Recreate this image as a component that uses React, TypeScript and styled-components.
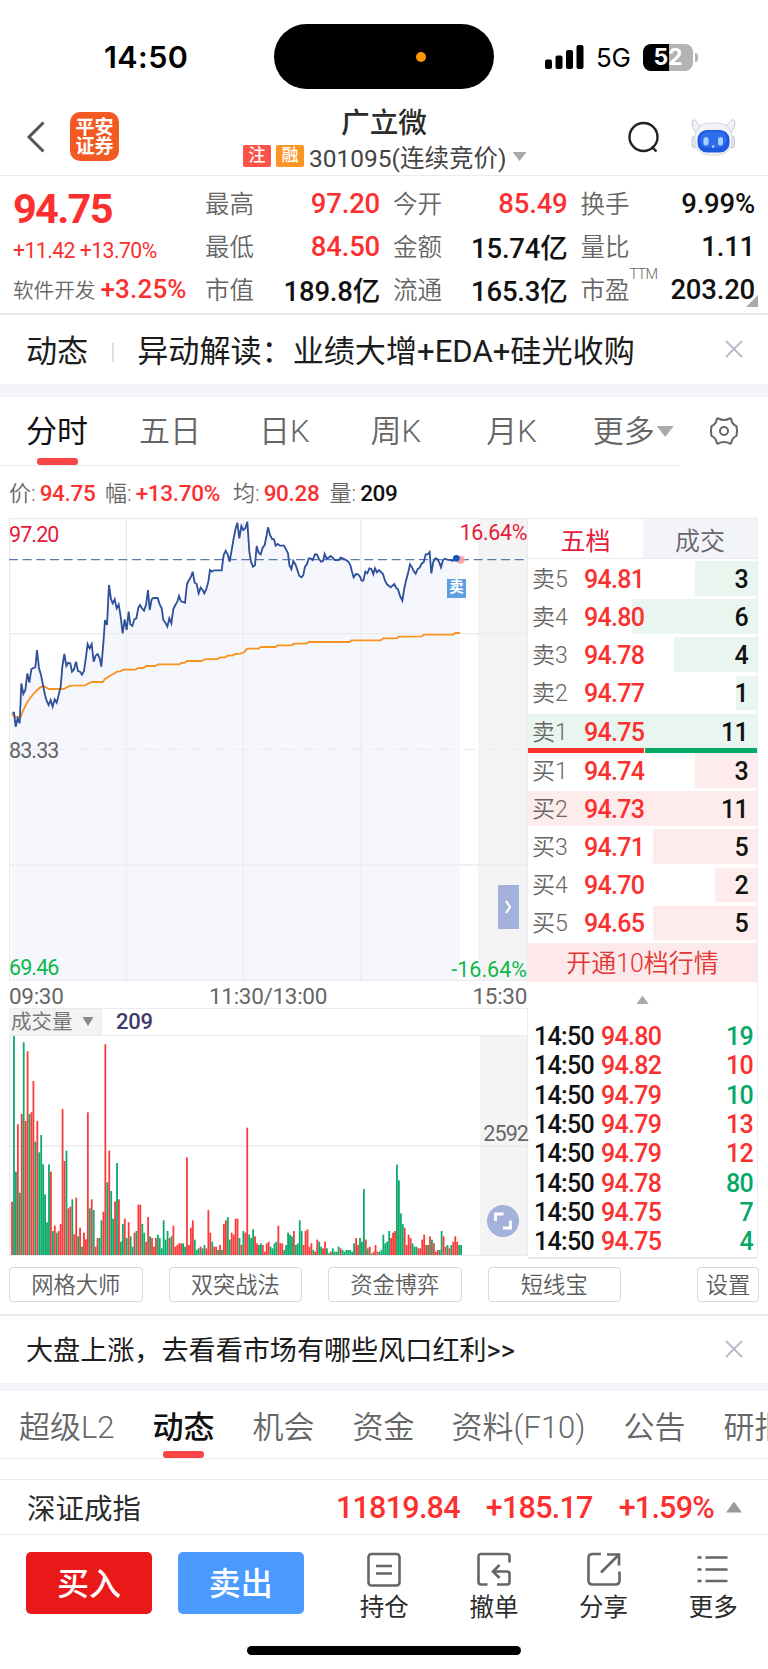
import React from "react";
import styled, { createGlobalStyle } from "styled-components";

const RED = "#fb302f";
const CRIMSON = "#e61a3c";
const GREEN = "#05a866";
const LINE = "#e9ebef";

const GlobalStyle = createGlobalStyle`
  * { box-sizing: border-box; }
  body {
    margin: 0;
    background: #fff;
    color: #111;
    font-family: Roboto, "Noto Sans CJK SC", sans-serif;
    white-space: nowrap;
  }
`;

const Screen = styled.main`
  width: 768px;
  height: 1669px;
  overflow: hidden;
  display: flex;
  flex-direction: column;
`;

/* ---------- status bar ---------- */
const StatusBar = styled.header`
  height: 96px;
  flex: none;
  display: grid;
  grid-template-columns: 274px 220px 1fr;
  padding-top: 24px;
  font-family: Inter, sans-serif;
  color: #000;
`;
const Clock = styled.div`
  height: 66px;
  display: flex;
  align-items: center;
  padding: 0 0 1px 104px;
  font-size: 30.5px;
  font-weight: 600;
  letter-spacing: 0.4px;
`;
const Island = styled.div`
  height: 65px;
  border-radius: 33px;
  background: #000;
  display: flex;
  align-items: center;
  padding: 1px 0 0 142px;
`;
const MicDot = styled.i`
  width: 10px;
  height: 10px;
  border-radius: 50%;
  background: #ff9500;
`;
const Signals = styled.div`
  height: 66px;
  display: flex;
  align-items: center;
  padding-left: 51px;
`;
const Network = styled.span`
  margin-left: 12px;
  width: 47px;
  font-size: 26px;
  letter-spacing: -0.4px;
`;
const Battery = styled.div`
  width: 50px;
  height: 27px;
  border-radius: 8px;
  background: linear-gradient(90deg, #000 52%, #b3b3b3 52%);
  color: #fff;
  font-size: 23px;
  font-weight: 700;
  display: flex;
  align-items: center;
  justify-content: center;
`;
const BatteryCap = styled.i`
  width: 3px;
  height: 9px;
  margin-left: 2px;
  border-radius: 0 3px 3px 0;
  background: #b3b3b3;
`;

/* ---------- title bar ---------- */
const TitleBar = styled.div`
  height: 80px;
  flex: none;
  display: grid;
  grid-template-columns: 70px 173px 1fr 64px 77px;
  border-bottom: 1px solid ${LINE};
`;
const BackSlot = styled.div`padding: 25px 0 0 25px;`;
const Brand = styled.div`
  margin-top: 16px;
  width: 49px;
  height: 49px;
  border-radius: 10px;
  background: #f25a22;
  color: #fff;
  font-size: 19px;
  line-height: 19px;
  font-weight: 700;
  padding-top: 6px;
  text-align: center;
  white-space: normal;
`;
const TitleBlock = styled.div`
  display: flex;
  flex-direction: column;
`;
const StockName = styled.h1`
  margin: 10.5px 0 0 98px;
  font-size: 28.7px;
  line-height: 32px;
  font-weight: 500;
  color: #2b2b2b;
`;
const StockCode = styled.div`
  display: flex;
  align-items: center;
  height: 30px;
  margin-top: 3px;
  font-size: 24.5px;
  color: #444;
`;
const Tag = styled.span<{ $bg: string }>`
  width: 28px;
  height: 22px;
  margin: -1px 5px 0 0;
  border-radius: 2px;
  background: ${(p) => p.$bg};
  color: #fff;
  font-size: 17px;
  line-height: 21px;
  font-weight: 500;
  text-align: center;
`;
const Caret = styled.i<{ $w: number; $h: number; $c?: string; $up?: boolean }>`
  width: ${(p) => p.$w}px;
  height: ${(p) => p.$h}px;
  flex: none;
  background: ${(p) => p.$c || "#aaa"};
  clip-path: ${(p) => (p.$up ? "polygon(50% 0, 100% 100%, 0 100%)" : "polygon(0 0, 100% 0, 50% 100%)")};
`;
const CodeCaret = styled(Caret)`margin-left: 6px;`;
const TabCaret = styled(Caret)`margin: 29px 0 0 2px;`;
const IndexCaret = styled(Caret)`margin-left: 12px;`;
const IconSlot = styled.div<{ $top: number }>`padding-top: ${(p) => p.$top}px;`;

/* ---------- quote ---------- */
const Quote = styled.section`
  height: 139px;
  flex: none;
  position: relative;
  display: grid;
  grid-template-columns: 192px 174px 187.5px 187.5px;
  padding: 5px 14px 0 13px;
  border-bottom: 2px solid ${LINE};
`;
const QuoteCol = styled.div<{ $pad?: number; $top?: number }>`
  display: flex;
  flex-direction: column;
  padding: ${(p) => p.$top || 0}px 0 0 ${(p) => p.$pad || 0}px;
`;
const QuoteRow = styled.div`
  height: 43.2px;
  display: flex;
  align-items: center;
  justify-content: space-between;
`;
const Label = styled.span`
  font-size: 24.5px;
  font-weight: 350;
  color: #666;
`;
const Value = styled.span<{ $up?: boolean }>`
  font-size: 27.5px;
  font-weight: 500;
  letter-spacing: -0.2px;
  margin: 1px -1px 0 0;
  color: ${(p) => (p.$up ? RED : "#111")};
`;
const Price = styled.div`
  height: 45px;
  line-height: 46px;
  font-size: 41.5px;
  font-weight: 700;
  letter-spacing: -1.7px;
  color: ${RED};
`;
const Change = styled.div`
  height: 36px;
  line-height: 40px;
  font-size: 21.3px;
  font-weight: 450;
  letter-spacing: -0.6px;
  color: ${RED};
`;
const Sector = styled.div`
  height: 43px;
  display: flex;
  align-items: center;
  font-size: 20.6px;
  font-weight: 350;
  color: #666;
  gap: 5px;
`;
const SectorChange = styled.span`
  font-size: 26px;
  font-weight: 500;
  letter-spacing: 0.2px;
  margin-top: 1px;
  color: ${RED};
`;
const Ttm = styled.sup`
  font-size: 14.5px;
  line-height: 14px;
  position: relative;
  top: -11px;
  letter-spacing: -0.7px;
`;
const Corner = styled.i`
  position: absolute;
  right: 10px;
  bottom: 6px;
  width: 12px;
  height: 12px;
  background: #aaa;
  clip-path: polygon(100% 0, 100% 100%, 0 100%);
`;

/* ---------- notice rows ---------- */
const Notice = styled.div<{ $h: number; $size: number }>`
  height: ${(p) => p.$h}px;
  flex: none;
  display: flex;
  align-items: center;
  padding: 0 25px 2px 26px;
  font-size: ${(p) => p.$size}px;
  color: #1c1c1c;
`;
const NoticeDivider = styled.i`
  width: 2px;
  height: 19px;
  margin: 7px 23px 0 24px;
  background: #dedee4;
`;
const NoticeText = styled.span`flex: 1;`;
const Band = styled.div<{ $h: number }>`
  height: ${(p) => p.$h}px;
  flex: none;
  background: #f3f4f9;
`;

/* ---------- tabs ---------- */
const PeriodTabs = styled.nav`
  height: 69px;
  width: 680px;
  flex: none;
  display: flex;
  border-bottom: 1px solid ${LINE};
`;
const PeriodWrap = styled.div`
  display: flex;
  flex: none;
`;
const Tab = styled.div<{ $ml: number; $on?: boolean; $weight?: number; $gap?: number }>`
  margin-left: ${(p) => p.$ml}px;
  height: 100%;
  flex: none;
  display: flex;
  flex-direction: column;
  justify-content: flex-end;
  align-items: center;
  font-size: 31px;
  line-height: 45px;
  font-weight: ${(p) => p.$weight || 350};
  color: ${(p) => (p.$on ? "#111" : "#666")};
  &::after {
    content: "";
    width: 41px;
    height: 7px;
    margin-top: ${(p) => p.$gap ?? 4}px;
    border-radius: 3px;
    background: ${(p) => (p.$on ? "#f94545" : "transparent")};
  }
`;
const GearSlot = styled.div`padding: 19px 0 0 29px;`;

const InfoLine = styled.div`
  height: 52px;
  flex: none;
  display: flex;
  align-items: center;
  padding: 0 0 2px 9px;
  font-size: 22px;
  color: #666;
`;
const InfoItem = styled.span<{ $w: number }>`
  width: ${(p) => p.$w}px;
  font-weight: 350;
`;
const InfoValue = styled.b<{ $c: string }>`
  font-size: 22.5px;
  font-weight: 500;
  letter-spacing: -0.3px;
  color: ${(p) => p.$c};
  margin-left: 4px;
`;

/* ---------- market area ---------- */
const Market = styled.section`
  height: 738px;
  flex: none;
  display: grid;
  grid-template-columns: 519px 230px;
  padding-left: 9px;
`;
const Charts = styled.div`
  display: flex;
  flex-direction: column;
`;
const Plot = styled.div<{ $h: number }>`
  position: relative;
  height: ${(p) => p.$h}px;
  flex: none;
  svg { display: block; }
`;
const AxisLabel = styled.span<{ $c: string }>`
  position: absolute;
  font-size: 21.5px;
  font-weight: 450;
  line-height: 22px;
  letter-spacing: -0.9px;
  color: ${(p) => p.$c};
`;
const TopLeft = styled(AxisLabel)`left: 0; top: 6px;`;
const TopRight = styled(AxisLabel)`
  right: 1px;
  top: 4px;
  letter-spacing: -0.4px;
`;
const MidLeft = styled(AxisLabel)`left: 0; top: 222px;`;
const BottomLeft = styled(AxisLabel)`left: 0; bottom: 2px;`;
const BottomRight = styled(AxisLabel)`
  right: 1px;
  bottom: 0;
  letter-spacing: 0;
`;
const SellMark = styled.span`
  position: absolute;
  left: 438px;
  top: 61px;
  width: 19px;
  height: 19px;
  background: #5e9fe0;
  color: #fff;
  font-size: 14.5px;
  line-height: 18px;
  font-weight: 700;
  text-align: center;
`;
const Expander = styled.button`
  position: absolute;
  left: 489px;
  top: 367px;
  width: 21px;
  height: 44px;
  border: 0;
  padding: 0 0 0 7px;
  background: #a4b2db;
`;
const TimeAxis = styled.div`
  height: 27px;
  display: flex;
  justify-content: space-between;
  align-items: center;
  padding: 2px 1px 0 0;
  font-size: 22.5px;
  letter-spacing: -0.3px;
  color: #666;
`;
const VolumeHead = styled.div`
  height: 28px;
  flex: none;
  display: flex;
  align-items: center;
  border: 1px solid ${LINE};
  border-left: 0;
  font-size: 22px;
  font-weight: 500;
  letter-spacing: -0.3px;
  line-height: 24px;
  color: #3f3a6b;
`;
const VolumeSelect = styled.div`
  width: 93px;
  height: 26px;
  margin-right: 14px;
  display: flex;
  align-items: center;
  gap: 10px;
  padding: 0 0 1px 2px;
  background: #f3f3f3;
  border-right: 1px solid #eaeaea;
  font-size: 20.5px;
  font-weight: 400;
  letter-spacing: 0;
  color: #777;
`;
const VolumeScale = styled(AxisLabel)`right: 0; top: 87px;`;
const FullScreen = styled.button`
  position: absolute;
  left: 478px;
  top: 169px;
  width: 32px;
  height: 32px;
  border: 0;
  border-radius: 50%;
  padding: 0;
  background: #a4b2db;
`;

/* ---------- order book ---------- */
const Book = styled.div`
  border: 1px solid ${LINE};
  border-left: 0;
  border-bottom-width: 2px;
  display: flex;
  flex-direction: column;
`;
const BookTabs = styled.div`
  height: 40px;
  flex: none;
  display: grid;
  grid-template-columns: 115px 1fr;
  border-bottom: 1px solid ${LINE};
  margin-bottom: 2px;
`;
const BookTab = styled.div<{ $on?: boolean }>`
  display: flex;
  align-items: center;
  justify-content: center;
  font-size: 25px;
  font-weight: ${(p) => (p.$on ? 400 : 350)};
  color: ${(p) => (p.$on ? CRIMSON : "#666")};
  background: ${(p) => (p.$on ? "#fff" : "#f2f4f9")};
`;
const Level = styled.div<{ $fill: number; $sell?: boolean }>`
  height: 34.6px;
  margin-bottom: 3.6px;
  flex: none;
  display: grid;
  grid-template-columns: 52px 1fr auto;
  align-items: center;
  padding: 3px 9px 0 4px;
  background: linear-gradient(${(p) => (p.$sell ? "#e9f6ef, #e9f6ef" : "#feecec, #feecec")}) right / ${(p) => p.$fill}px 100% no-repeat;
`;
const LevelName = styled.span`
  font-size: 23px;
  line-height: 30px;
  font-weight: 350;
  color: #666;
`;
const Num = styled.span<{ $c?: string }>`
  font-size: 25px;
  line-height: 28px;
  font-weight: 500;
  letter-spacing: -0.7px;
  color: ${(p) => p.$c || "#111"};
`;
const Balance = styled.div`
  height: 5px;
  margin-top: -4px;
  flex: none;
  display: grid;
  grid-template-columns: 116px 1fr;
  gap: 1px;
`;
const BalanceBar = styled.i<{ $c: string }>`background: ${(p) => p.$c};`;
const Upgrade = styled.div`
  height: 39px;
  margin-top: -1px;
  flex: none;
  background: #fde9e9;
  color: #e43434;
  font-size: 25px;
  font-weight: 350;
  padding-bottom: 2px;
  display: flex;
  align-items: center;
  justify-content: center;
`;
const CaretRow = styled.div`
  height: 42px;
  flex: none;
  display: flex;
  align-items: center;
  padding: 0 0 6px 108px;
  margin-bottom: -1px;
`;
const Trade = styled.div`
  height: 29.3px;
  flex: none;
  display: grid;
  grid-template-columns: 67px 1fr auto;
  align-items: center;
  padding: 0 4px 1px 6px;
`;

/* ---------- tools ---------- */
const Tools = styled.div`
  height: 58px;
  flex: none;
  display: flex;
  align-items: flex-start;
  gap: 26px;
  padding: 11px 9px 0;
`;
const Tool = styled.button<{ $small?: boolean }>`
  width: ${(p) => (p.$small ? 62 : 133.5)}px;
  height: 35px;
  margin-left: ${(p) => (p.$small ? "auto" : 0)};
  padding: 1px 0 0;
  border: 1px solid #d9d9d9;
  border-radius: 4px;
  background: #fff;
  font-family: inherit;
  font-size: 22.3px;
  font-weight: 350;
  line-height: 32px;
  color: #5c5c5c;
`;
const Rule = styled.hr<{ $h: number }>`
  width: 100%;
  height: ${(p) => p.$h}px;
  flex: none;
  margin: 0;
  border: 0;
  background: ${LINE};
`;

const SectionTabs = styled.nav`
  height: 68px;
  flex: none;
  display: flex;
  border-bottom: 1px solid ${LINE};
`;

/* ---------- index + action bar ---------- */
const IndexRow = styled.div`
  height: 56px;
  flex: none;
  margin-top: 20px;
  display: flex;
  align-items: center;
  border: 1px solid ${LINE};
  border-width: 1px 0;
  padding: 0 26px 0 27px;
`;
const IndexName = styled.span`
  flex: 1;
  font-size: 28.5px;
  padding-bottom: 2px;
  color: #2c2c2c;
`;
const IndexValue = styled.span<{ $ml: number }>`
  margin-left: ${(p) => p.$ml}px;
  font-size: 30.5px;
  font-weight: 500;
  letter-spacing: -0.75px;
  color: ${RED};
`;
const Actions = styled.footer`
  height: 111px;
  flex: none;
  display: flex;
  padding: 17px 0 0 26px;
`;
const Deal = styled.button<{ $bg: string }>`
  width: 126px;
  height: 61.5px;
  margin-right: 26px;
  padding: 2px 0 0;
  border: 0;
  border-radius: 5px;
  background: ${(p) => p.$bg};
  color: #fff;
  font-family: inherit;
  font-size: 32px;
  line-height: 58px;
  font-weight: 500;
`;
const Action = styled.div`
  width: 109.8px;
  display: flex;
  flex-direction: column;
  align-items: center;
  font-size: 24.5px;
  line-height: 34px;
  color: #2c2c2c;
  svg { height: 36px; margin-bottom: 3px; flex: none; }
`;
const HomeBar = styled.i`
  width: 274px;
  height: 9px;
  flex: none;
  align-self: center;
  border-radius: 5px;
  background: #000;
`;

/* price line and average line, in thirds of a pixel */
const PRICE =
  "37,608 42,608 47,650 53,625 59,640 64,520 70,552 76,540 82,490 88,518 94,478 100,474 106,472 111,420 117,475 123,495 129,525 135,555 141,575 146,585 152,570 158,590 164,568 170,578 176,555 182,530 187,470 193,432 199,468 205,458 211,460 216,485 222,478 228,455 234,483 240,485 246,494 252,483 258,440 263,402 269,415 275,402 281,455 287,437 293,432 299,445 304,470 310,400 315,330 321,345 327,225 333,268 338,280 344,268 350,295 356,283 362,320 368,370 374,328 380,360 386,305 391,343 397,348 403,328 409,325 415,293 420,285 426,295 432,302 438,285 444,240 449,300 455,268 461,264 473,264 479,283 485,295 490,330 496,338 502,350 508,325 514,340 520,297 526,285 532,275 537,258 543,274 555,278 561,222 567,210 573,200 578,185 584,218 590,222 596,250 602,233 608,240 613,250 619,237 625,215 630,180 636,185 642,181 665,181 671,135 677,122 683,133 689,155 695,120 701,85 707,55 712,38 718,85 724,48 730,60 736,55 742,35 748,125 753,155 759,170 765,165 770,108 776,128 782,133 788,113 794,105 800,75 804,52 810,75 816,87 822,88 827,107 833,102 840,107 852,107 858,118 864,130 868,165 874,178 880,153 887,165 892,180 898,198 905,202 910,195 915,170 921,162 926,145 932,145 938,150 945,133 951,134 957,147 963,155 969,153 974,132 980,146 986,143 992,138 998,143 1004,150 1016,150 1022,143 1028,145 1038,150 1045,155 1051,165 1056,185 1061,202 1068,192 1074,193 1080,200 1085,212 1090,212 1096,185 1102,190 1108,175 1114,177 1120,193 1125,175 1131,187 1137,180 1143,186 1149,192 1155,212 1161,223 1172,232 1183,222 1188,233 1194,238 1200,258 1207,272 1212,240 1218,212 1224,190 1230,163 1236,172 1242,185 1247,191 1253,177 1259,173 1265,160 1271,157 1277,133 1283,133 1289,126 1294,190 1300,155 1306,145 1312,147 1318,158 1323,172 1329,150 1335,146 1342,149 1352,150 1358,153 1364,150 1370,144 1380,148";
const AVERAGE =
  "35,612 48,622 62,622 70,600 80,580 90,565 100,552 112,540 122,531 135,530 147,537 192,537 200,532 212,527 256,526 266,520 275,516 308,516 315,507 325,501 333,495 342,492 350,485 360,484 370,479 406,479 415,474 430,474 440,468 465,468 474,463 537,463 545,459 555,458 561,453 606,453 613,448 653,447 660,442 675,442 683,437 697,437 706,432 722,431 733,426 741,416 775,416 782,411 827,411 833,406 875,406 882,401 920,401 926,396 1048,396 1055,391 1142,391 1150,385 1190,385 1196,380 1265,379 1271,374 1360,374 1366,369 1380,369";

const VOLUMES =
  "r160 g658 g250 r392 g187 r423 g638 r402 r611 g423 r428 r522 g340 r402 g308 g360 g272 g182 g98 g272 r250 g72 r88 g67 r72 r93 r438 r282 g313 r140 r145 g167 r62 r172 g56 r82 g25 r67 r47 r428 g140 r167 g135 r25 r51 g51 g104 r130 r632 g218 r313 g192 g109 r161 g276 r167 g40 g93 r109 g51 r98 g56 g25 r67 g72 r151 r151 g93 g67 r40 r114 g56 r51 r25 r51 g61 g51 g20 g104 g46 g72 r51 g56 r88 r25 r30 r35 r35 g35 g25 r293 r30 r82 r104 g46 g15 g20 r25 g20 g30 r20 r135 r67 g40 r25 r25 g15 r30 g15 r93 r104 g114 g46 r67 r61 r109 r109 g51 r30 g72 r67 r382 g61 g51 g77 r56 r35 g30 g35 r30 r10 r35 r40 g25 g20 g35 g40 r88 r35 r35 g15 g30 g67 g61 g56 r72 g30 g35 g104 g72 r30 r72 r77 r25 r35 g15 r10 r46 g40 g25 r20 r40 g20 g5 r10 g20 g10 g10 g25 r20 g15 g10 g15 g15 g15 g10 g35 r51 r30 g51 g40 g198 r46 g20 r25 g5 r10 r30 r10 g10 g15 g61 g35 g40 g72 r51 r67 r72 g271 g224 g125 g93 r82 r30 r61 r51 g35 g25 g25 r20 r20 r46 r61 r30 g30 r56 g46 r35 r10 r15 g15 g72 r56 r25 g30 r20 g30 r40 r56 r40 g30 g30".split(" ");

const SELLS: [string, string, string, number][] = [
  ["卖5", "94.81", "3", 62],
  ["卖4", "94.80", "6", 125],
  ["卖3", "94.78", "4", 83],
  ["卖2", "94.77", "1", 21],
  ["卖1", "94.75", "11", 230],
];
const BUYS: [string, string, string, number][] = [
  ["买1", "94.74", "3", 62],
  ["买2", "94.73", "11", 230],
  ["买3", "94.71", "5", 104],
  ["买4", "94.70", "2", 42],
  ["买5", "94.65", "5", 104],
];
const TRADES: [string, string, boolean][] = [
  ["94.80", "19", false],
  ["94.82", "10", true],
  ["94.79", "10", false],
  ["94.79", "13", true],
  ["94.79", "12", true],
  ["94.78", "80", false],
  ["94.75", "7", false],
  ["94.75", "4", false],
];

const CloseIcon = () => (
  <svg width="18" height="18" viewBox="0 0 18 18" fill="none" stroke="#b9b9cb" strokeWidth="1.8">
    <path d="M1 1l16 16M17 1L1 17" />
  </svg>
);

const RobotIcon = () => (
  <svg width="46" height="38" viewBox="0 0 46 38">
    <path d="M6 15C1 9 0 4 2 1c3-1 4 4 8 6l26-1c3-2 4-6 7-5 2 3 1 8-4 14z" fill="#eff1f5" stroke="#c4c8cf" strokeWidth="1" />
    <rect x="1" y="17" width="5" height="12" rx="2.5" fill="#dfe3ea" stroke="#bcc1ca" strokeWidth=".8" />
    <rect x="38.500" y="17" width="5" height="12" rx="2.5" fill="#dfe3ea" stroke="#bcc1ca" strokeWidth=".8" />
    <rect x="4" y="4" width="37" height="32" rx="14" fill="#f1f3f7" stroke="#cfd3db" strokeWidth=".8" />
    <rect x="6.500" y="11" width="32" height="22.500" rx="9.500" fill="#1c59e0" />
    <rect x="9" y="12.500" width="27" height="16" rx="8" fill="#3c7cf5" opacity=".6" />
    <rect x="12.500" y="18" width="5" height="8.500" rx="2.500" fill="#a9d3ff" />
    <rect x="27" y="18" width="5" height="8.500" rx="2.500" fill="#a9d3ff" />
    <circle cx="22.200" cy="27.500" r="1.200" fill="#bfe0ff" />
  </svg>
);

const GearIcon = () => (
  <svg width="30" height="30" viewBox="0 0 30 30" fill="none" stroke="#666" strokeWidth="2" strokeLinejoin="round">
    <path d="M9.300 2.500Q15 5.500 20.700 2.500Q21.500 2 22.300 3.300Q22.800 8 27.500 10.200Q28.600 15 27.500 19.800Q22.800 22 22.300 26.700Q21.500 28 20.700 27.500Q15 24.500 9.300 27.500Q8.500 28 7.700 26.700Q7.200 22 2.500 19.800Q1.400 15 2.500 10.200Q7.200 8 7.700 3.300Q8.500 2 9.300 2.500Z" />
    <circle cx="15" cy="15" r="4" />
  </svg>
);

const PriceChart = () => (
  <svg width="519" height="463" viewBox="27 24 1557 1389" fill="none">
    <rect x="1434" y="24" width="150" height="1389" fill="#f4f4f5" />
    <polygon points={`37,1412 ${PRICE} 1380,1412`} fill="#f5f7fc" />
    <g stroke="#ebecef" strokeWidth="4">
      <path d="M27 26H1584M27 371H1584M27 1065H1584M27 1411H1584M29 24V1413M379 24V1413M730 24V1413M1083 24V1413M1582 24V1413" />
      <path d="M27 718H1584" strokeDasharray="40 28" />
    </g>
    <path d="M27 149H1584" stroke="#5b78b0" strokeWidth="4" strokeDasharray="27 14" />
    <polyline points={AVERAGE} stroke="#f7931e" strokeWidth="5.500" />
    <polyline points={PRICE} stroke="#2f519b" strokeWidth="5.500" />
    <circle cx="1382" cy="149" r="12" fill="#ff9a9a" opacity=".9" />
    <circle cx="1369" cy="145" r="10" fill="#1256c4" />
  </svg>
);

const VolumeChart = () => (
  <svg width="519" height="220" viewBox="27 48 1557 660" fill="none">
    <rect x="1440" y="48" width="144" height="660" fill="#f4f4f5" />
    <path d="M27 378H1584M27 706H1584M29 48V708M1582 48V708" stroke="#ebecef" strokeWidth="4" />
    {VOLUMES.map((v, i) => {
      const h = Number(v.slice(1));
      return (
        <rect
          key={i}
          x={33.4 + i * 5.832}
          y={705 - h}
          width="5.400"
          height={h}
          fill={v[0] === "r" ? "#fb3a3a" : "#0aab6b"}
        />
      );
    })}
  </svg>
);

const levels = (rows: typeof SELLS, sell: boolean) =>
  rows.map(([name, price, qty, fill]) => (
    <Level key={name} $fill={fill} $sell={sell}>
      <LevelName>{name}</LevelName>
      <Num $c={RED}>{price}</Num>
      <Num>{qty}</Num>
    </Level>
  ));

const iconProps = { width: 36, height: 36, viewBox: "0 0 36 36", fill: "none", stroke: "#666", strokeWidth: 2.6 };

export default function App() {
  return (
    <Screen>
      <GlobalStyle />
      <StatusBar>
        <Clock>14:50</Clock>
        <Island><MicDot /></Island>
        <Signals>
          <svg width="39" height="26" viewBox="0 0 39 26" fill="#000">
            <rect x="0" y="15.500" width="7" height="9.500" rx="2" />
            <rect x="10.500" y="11.500" width="7" height="13.500" rx="2" />
            <rect x="21" y="6" width="7" height="19" rx="2" />
            <rect x="31.500" y="1" width="7" height="24" rx="2" />
          </svg>
          <Network>5G</Network>
          <Battery>52</Battery>
          <BatteryCap />
        </Signals>
      </StatusBar>

      <TitleBar>
        <BackSlot>
          <svg width="22" height="32" viewBox="0 0 22 32" fill="none" stroke="#555" strokeWidth="3">
            <path d="M18.500 1.500L4 16l14.500 14.500" />
          </svg>
        </BackSlot>
        <Brand>平安<br />证券</Brand>
        <TitleBlock>
          <StockName>广立微</StockName>
          <StockCode>
            <Tag $bg="#fb5349">注</Tag>
            <Tag $bg="#fd9426">融</Tag>
            301095(连续竞价)
            <CodeCaret $w={14} $h={9} />
          </StockCode>
        </TitleBlock>
        <IconSlot $top={25}>
          <svg width="32" height="34" viewBox="0 0 32 34" fill="none" stroke="#222" strokeWidth="2.400">
            <circle cx="16.500" cy="16" r="14" />
            <path d="M24.500 25.500l5 5" />
          </svg>
        </IconSlot>
        <IconSlot $top={23}><RobotIcon /></IconSlot>
      </TitleBar>

      <Quote>
        <QuoteCol $top={5}>
          <Price>94.75</Price>
          <Change>+11.42 +13.70%</Change>
          <Sector>软件开发<SectorChange>+3.25%</SectorChange></Sector>
        </QuoteCol>
        <QuoteCol>
          <QuoteRow><Label>最高</Label><Value $up>97.20</Value></QuoteRow>
          <QuoteRow><Label>最低</Label><Value $up>84.50</Value></QuoteRow>
          <QuoteRow><Label>市值</Label><Value>189.8亿</Value></QuoteRow>
        </QuoteCol>
        <QuoteCol $pad={14}>
          <QuoteRow><Label>今开</Label><Value $up>85.49</Value></QuoteRow>
          <QuoteRow><Label>金额</Label><Value>15.74亿</Value></QuoteRow>
          <QuoteRow><Label>流通</Label><Value>165.3亿</Value></QuoteRow>
        </QuoteCol>
        <QuoteCol $pad={14}>
          <QuoteRow><Label>换手</Label><Value>9.99%</Value></QuoteRow>
          <QuoteRow><Label>量比</Label><Value>1.11</Value></QuoteRow>
          <QuoteRow><Label>市盈<Ttm>TTM</Ttm></Label><Value>203.20</Value></QuoteRow>
        </QuoteCol>
        <Corner />
      </Quote>

      <Notice $h={69} $size={31.1}>
        动态
        <NoticeDivider />
        <NoticeText>异动解读：业绩大增+EDA+硅光收购</NoticeText>
        <CloseIcon />
      </Notice>
      <Band $h={13} />

      <PeriodWrap>
        <PeriodTabs>
          <Tab $ml={26} $on $weight={400}>分时</Tab>
          <Tab $ml={51}>五日</Tab>
          <Tab $ml={58}>日K</Tab>
          <Tab $ml={61}>周K</Tab>
          <Tab $ml={65}>月K</Tab>
          <Tab $ml={56}>更多</Tab>
          <TabCaret $w={17} $h={11} />
        </PeriodTabs>
        <GearSlot><GearIcon /></GearSlot>
      </PeriodWrap>

      <InfoLine>
        <InfoItem $w={96}>价:<InfoValue $c={RED}>94.75</InfoValue></InfoItem>
        <InfoItem $w={128}>幅:<InfoValue $c={RED}>+13.70%</InfoValue></InfoItem>
        <InfoItem $w={96.5}>均:<InfoValue $c={RED}>90.28</InfoValue></InfoItem>
        <InfoItem $w={90}>量:<InfoValue $c="#111">209</InfoValue></InfoItem>
      </InfoLine>

      <Market>
        <Charts>
          <Plot $h={463}>
            <PriceChart />
            <TopLeft $c={CRIMSON}>97.20</TopLeft>
            <TopRight $c={CRIMSON}>16.64%</TopRight>
            <MidLeft $c="#666">83.33</MidLeft>
            <BottomLeft $c="#0fb84c">69.46</BottomLeft>
            <BottomRight $c="#0fb84c">-16.64%</BottomRight>
            <SellMark>卖</SellMark>
            <Expander>
              <svg width="8" height="16" viewBox="0 0 8 16" fill="none" stroke="#fff" strokeWidth="2.200">
                <path d="M1 2l4 6-4 6" />
              </svg>
            </Expander>
          </Plot>
          <TimeAxis><span>09:30</span><span>11:30/13:00</span><span>15:30</span></TimeAxis>
          <VolumeHead>
            <VolumeSelect>成交量<Caret $w={11} $h={9} $c="#888" /></VolumeSelect>
            209
          </VolumeHead>
          <Plot $h={220}>
            <VolumeChart />
            <VolumeScale $c="#666">2592</VolumeScale>
            <FullScreen>
              <svg width="32" height="32" viewBox="0 0 32 32" fill="none" stroke="#fff" strokeWidth="2.800">
                <path d="M8.500 16V9H16.500M23.500 15.500v7.500h-7.500" />
              </svg>
            </FullScreen>
          </Plot>
        </Charts>

        <Book>
          <BookTabs>
            <BookTab $on>五档</BookTab>
            <BookTab>成交</BookTab>
          </BookTabs>
          {levels(SELLS, true)}
          <Balance><BalanceBar $c="#fb302f" /><BalanceBar $c="#05a866" /></Balance>
          {levels(BUYS, false)}
          <Upgrade>开通10档行情</Upgrade>
          <CaretRow><Caret $w={13} $h={9} $up /></CaretRow>
          {TRADES.map(([price, qty, up], i) => (
            <Trade key={i}>
              <Num>14:50</Num>
              <Num $c={RED}>{price}</Num>
              <Num $c={up ? RED : GREEN}>{qty}</Num>
            </Trade>
          ))}
        </Book>
      </Market>

      <Tools>
        <Tool>网格大师</Tool>
        <Tool>双突战法</Tool>
        <Tool>资金博弈</Tool>
        <Tool>短线宝</Tool>
        <Tool $small>设置</Tool>
      </Tools>
      <Rule $h={2} />
      <Notice $h={67} $size={27.1}>
        <NoticeText>大盘上涨，去看看市场有哪些风口红利&gt;&gt;</NoticeText>
        <CloseIcon />
      </Notice>
      <Band $h={8} />

      <SectionTabs>
        <Tab $ml={19} $gap={1}>超级L2</Tab>
        <Tab $ml={38} $gap={1} $on $weight={450}>动态</Tab>
        <Tab $ml={38} $gap={1}>机会</Tab>
        <Tab $ml={38} $gap={1}>资金</Tab>
        <Tab $ml={37} $gap={1}>资料(F10)</Tab>
        <Tab $ml={38} $gap={1}>公告</Tab>
        <Tab $ml={38} $gap={1}>研报</Tab>
      </SectionTabs>

      <IndexRow>
        <IndexName>深证成指</IndexName>
        <IndexValue $ml={0}>11819.84</IndexValue>
        <IndexValue $ml={26}>+185.17</IndexValue>
        <IndexValue $ml={26}>+1.59%</IndexValue>
        <IndexCaret $w={16} $h={11} $c="#999" $up />
      </IndexRow>

      <Actions>
        <Deal $bg="#ea1919">买入</Deal>
        <Deal $bg="#4b9aff">卖出</Deal>
        <Action>
          <svg {...iconProps}>
            <rect x="2.500" y="2" width="31" height="31.500" rx="3" />
            <path d="M10 14h16M10 21.500h16" />
          </svg>
          持仓
        </Action>
        <Action>
          <svg {...iconProps}>
            <path d="M33.500 10.500V4.500Q33.500 2 31 2H5Q2.500 2 2.500 4.500V30Q2.500 32.500 5 32.500H11.500M17.500 19.500H31Q33.500 19.500 33.500 22V30Q33.500 32.500 31 32.500H21M23.500 13L17 19.500l6.500 6.500" />
          </svg>
          撤单
        </Action>
        <Action>
          <svg {...iconProps}>
            <path d="M15 2H6.500Q2.500 2 2.500 6V28.500Q2.500 32.500 6.500 32.500H29.500Q33.500 32.500 33.500 28.500V19.500M21 2.500H33V13.500M33 2.500L15 20.500" />
          </svg>
          分享
        </Action>
        <Action>
          <svg {...iconProps}>
            <path d="M2.500 5.500h4M2.500 17.500h4M2.500 29h4M10.500 5.500h22M10.500 17.500h22M10.500 29h22" />
          </svg>
          更多
        </Action>
      </Actions>
      <HomeBar />
    </Screen>
  );
}
